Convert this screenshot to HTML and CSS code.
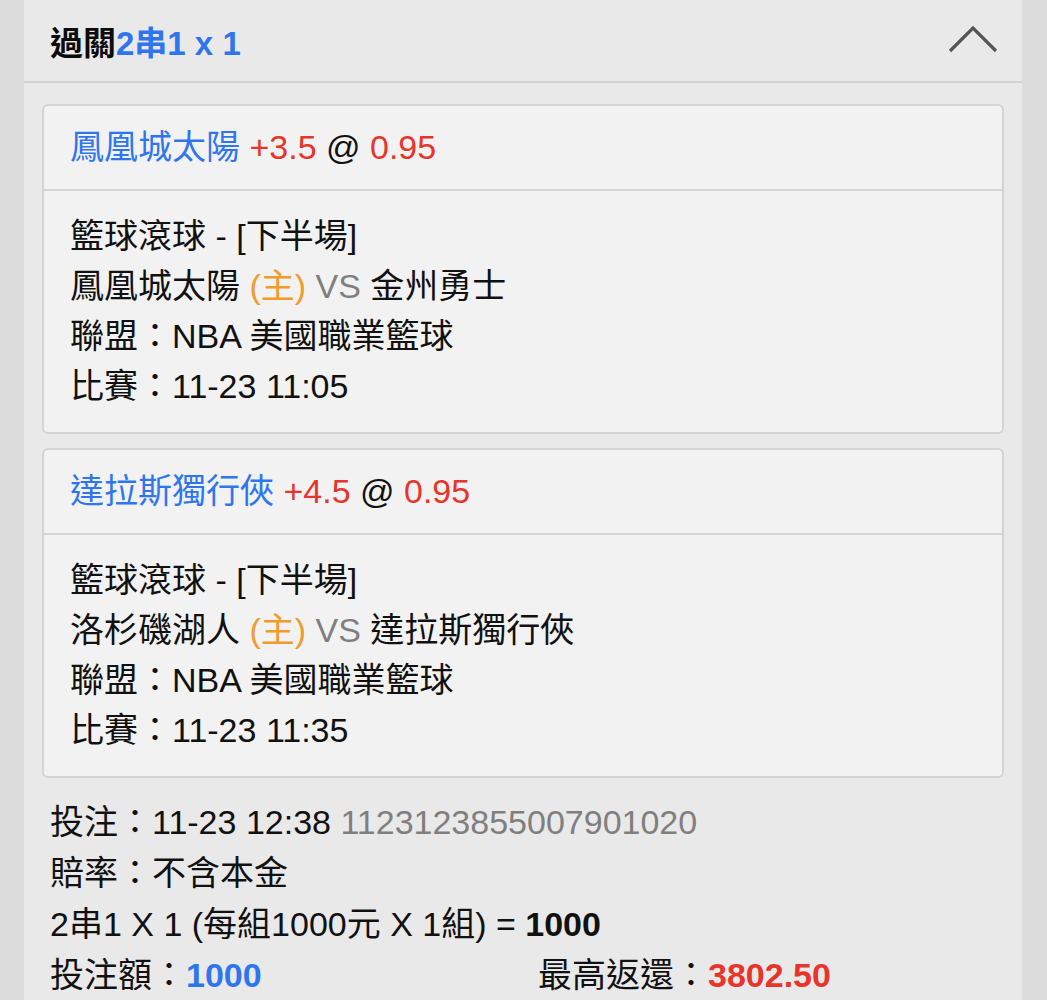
FILE: index.html
```html
<!DOCTYPE html>
<html lang="zh-Hant">
<head>
<meta charset="utf-8">
<link rel="stylesheet" href="styles.css">
</head>
<body>
<div class="page">
  <div class="panel">
    <div class="panel-head">
      <div class="title">過關<span class="blue">2串1 x 1</span></div>
      <svg class="chev" width="50" height="30" viewBox="0 0 50 30"><path d="M2 27 L25 4 L48 27" fill="none" stroke="#555" stroke-width="3.2"/></svg>
    </div>
    <div class="panel-body">
      <div class="card">
        <div class="card-head"><span class="blue">鳳凰城太陽</span> <span class="red">+3.5</span> @ <span class="red">0.95</span></div>
        <div class="card-body">
          <div>籃球滾球 - [下半場]</div>
          <div>鳳凰城太陽 <span class="orange">(主)</span> <span class="gray">VS</span> 金州勇士</div>
          <div>聯盟：NBA 美國職業籃球</div>
          <div>比賽：11-23 11:05</div>
        </div>
      </div>
      <div class="card">
        <div class="card-head"><span class="blue">達拉斯獨行俠</span> <span class="red">+4.5</span> @ <span class="red">0.95</span></div>
        <div class="card-body">
          <div>籃球滾球 - [下半場]</div>
          <div>洛杉磯湖人 <span class="orange">(主)</span> <span class="gray">VS</span> 達拉斯獨行俠</div>
          <div>聯盟：NBA 美國職業籃球</div>
          <div>比賽：11-23 11:35</div>
        </div>
      </div>
      <div class="summary">
        <div>投注：11-23 12:38 <span class="gray">1123123855007901020</span></div>
        <div>賠率：不含本金</div>
        <div>2串1 X 1 (每組1000元 X 1組) = <b>1000</b></div>
        <div class="two">
          <div>投注額：<b class="blue">1000</b></div>
          <div>最高返還：<b class="red">3802.50</b></div>
        </div>
      </div>
    </div>
  </div>
</div>
</body>
</html>
```

FILE: styles.css
```css
html, body {
  margin: 0;
  padding: 0;
}
body {
  background: #dcdcdc;
  font-family: "Liberation Sans", "Noto Sans CJK TC", sans-serif;
  color: #111;
}
.page {
  padding: 0 25px 0 24px;
}
.panel {
  background: #e9e9e9;
  min-height: 1000px;
}
.panel-head {
  height: 81px;
  border-bottom: 2px solid #d2d2d2;
  display: flex;
  align-items: center;
  justify-content: space-between;
  padding: 0 24px 0 26px;
}
.title {
  font-size: 33px;
  font-weight: bold;
  color: #0c0c0c;
}
.chev {
  display: block;
  margin-top: -4px;
}
.panel-body {
  padding: 21px 18px 0 18px;
  display: flex;
  flex-direction: column;
}
.card {
  background: #f2f2f2;
  border: 2px solid #d4d4d4;
  border-radius: 6px;
  margin-bottom: 14px;
}
.card-head {
  height: 83px;
  line-height: 83px;
  padding: 0 26px;
  font-size: 34px;
  border-bottom: 2px solid #d4d4d4;
}
.card-body {
  padding: 20px 26px 21px;
  font-size: 34px;
  line-height: 50px;
}
.summary {
  padding: 5px 8px 0;
  font-size: 34px;
  line-height: 51px;
}
.two {
  display: grid;
  grid-template-columns: 488px 1fr;
}
.blue { color: #2f76ee; }
.red { color: #e8352b; }
.orange { color: #f39a2c; }
.gray { color: #7f7f7f; }
b { font-weight: bold; }
```
